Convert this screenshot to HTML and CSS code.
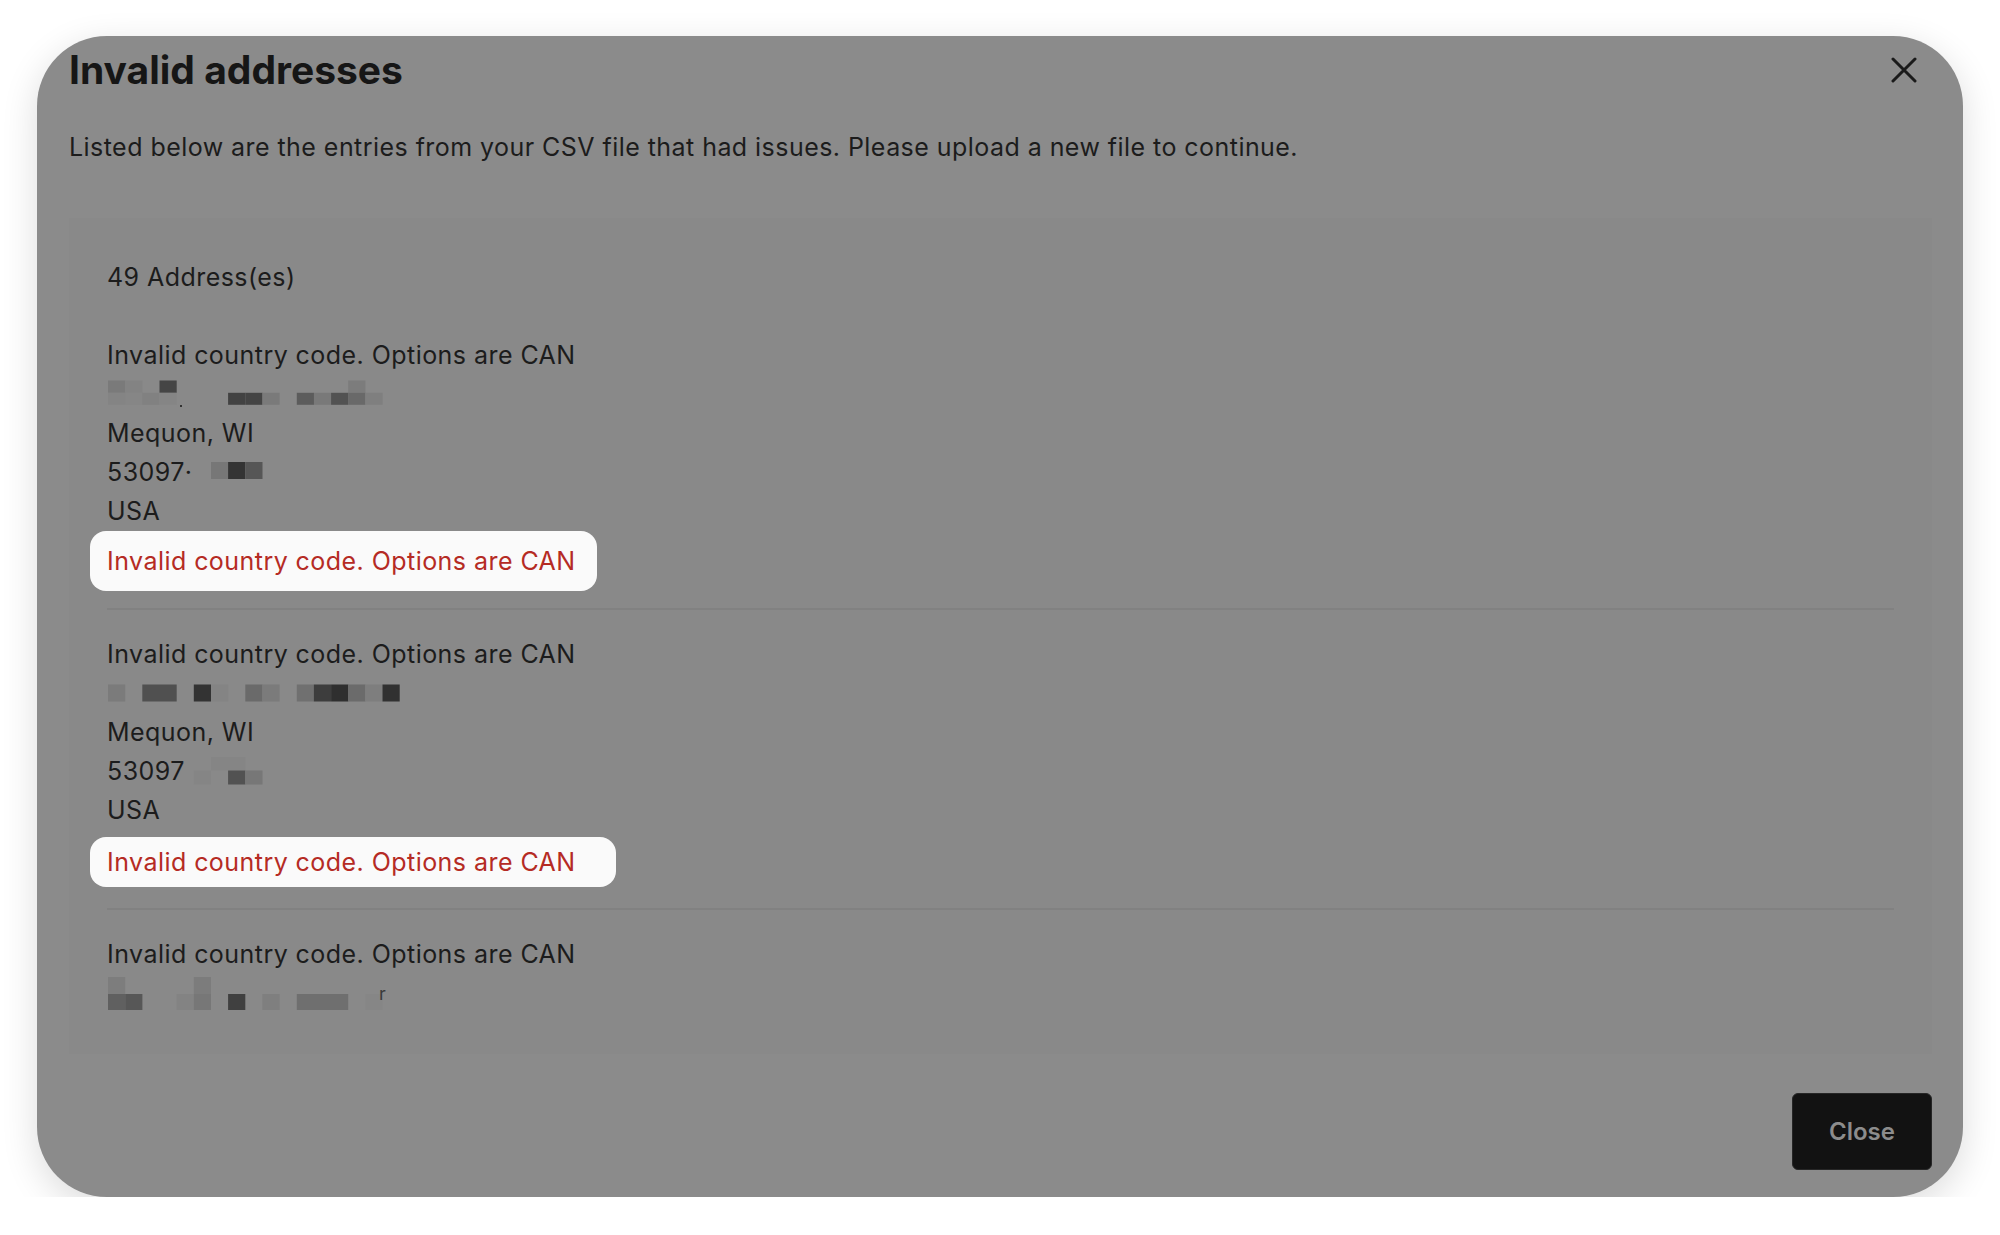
FILE: index.html
```html
<!DOCTYPE html>
<html lang="en">
<head>
    <meta charset="UTF-8">
    <meta name="viewport" content="width=device-width, initial-scale=1.0">
    <title>Invalid addresses</title>
    <link rel="stylesheet" href="styles.css">
</head>
<body>

    <div class="modal">
        <div class="modal-header">
            <h1>Invalid addresses</h1>
            <button class="icon-close" aria-label="Close">
                <svg width="26" height="26" viewBox="0 0 26 26">
                    <path d="M2 2 L24 24 M24 2 L2 24" stroke="#1a1a1a" stroke-width="3" stroke-linecap="round" fill="none"/>
                </svg>
            </button>
        </div>

        <p class="intro">Listed below are the entries from your CSV file that had issues. Please upload a new file to continue.</p>

        <div class="panel">
            <div class="list">
                <div class="count">49 Address(es)</div>

                <div class="entry">
                    <div class="line">Invalid country code. Options are CAN</div>
                    <div class="line redacted">
                        <svg class="blur" width="400" height="39" viewBox="0 0 400 39">
                            <rect x="1" y="5.5" width="17.2" height="12.3" fill="#7a7a7a"/>
                            <rect x="18.2" y="5.5" width="17.2" height="12.3" fill="#838383"/>
                            <rect x="52.5" y="5.5" width="17.2" height="12.3" fill="#454545"/>
                            <rect x="241.2" y="5.5" width="17.2" height="12.3" fill="#7c7c7c"/>
                            <rect x="1" y="17.8" width="17.2" height="12" fill="#848484"/>
                            <rect x="18.2" y="17.8" width="17.2" height="12" fill="#868686"/>
                            <rect x="35.3" y="17.8" width="17.2" height="12" fill="#818181"/>
                            <rect x="52.5" y="17.8" width="17.2" height="12" fill="#858585"/>
                            <rect x="73" y="30" width="2" height="2" fill="#333"/>
                            <rect x="121.1" y="17.8" width="17.2" height="12" fill="#424242"/>
                            <rect x="138.3" y="17.8" width="17.2" height="12" fill="#444444"/>
                            <rect x="155.4" y="17.8" width="17.2" height="12" fill="#7a7a7a"/>
                            <rect x="189.8" y="17.8" width="17.2" height="12" fill="#5c5c5c"/>
                            <rect x="206.9" y="17.8" width="17.2" height="12" fill="#797979"/>
                            <rect x="224.1" y="17.8" width="17.2" height="12" fill="#525252"/>
                            <rect x="241.2" y="17.8" width="17.2" height="12" fill="#696969"/>
                            <rect x="258.4" y="17.8" width="17.2" height="12" fill="#7f7f7f"/>
                        </svg>
                    </div>
                    <div class="line">Mequon, WI</div>
                    <div class="line redacted">53097·
                        <svg class="blur" width="400" height="39" viewBox="0 0 400 39">
                            <rect x="104" y="9" width="17.2" height="17" fill="#777777"/>
                            <rect x="121.1" y="9" width="17.2" height="17" fill="#343434"/>
                            <rect x="138.3" y="9" width="17.2" height="17" fill="#565656"/>
                        </svg>
                    </div>
                    <div class="line">USA</div>
                    <div class="error">Invalid country code. Options are CAN</div>
                </div>

                <div class="entry">
                    <div class="line">Invalid country code. Options are CAN</div>
                    <div class="line redacted">
                        <svg class="blur" width="400" height="39" viewBox="0 0 400 39">
                            <rect x="1" y="10.5" width="17.2" height="17" fill="#7b7b7b"/>
                            <rect x="35.3" y="10.5" width="34.4" height="17" fill="#505050"/>
                            <rect x="86.8" y="10.5" width="17.2" height="17" fill="#333333"/>
                            <rect x="104" y="10.5" width="17.2" height="17" fill="#848484"/>
                            <rect x="138.3" y="10.5" width="17.2" height="17" fill="#6a6a6a"/>
                            <rect x="155.4" y="10.5" width="17.2" height="17" fill="#7b7b7b"/>
                            <rect x="189.8" y="10.5" width="17.2" height="17" fill="#707070"/>
                            <rect x="206.9" y="10.5" width="17.2" height="17" fill="#3d3d3d"/>
                            <rect x="224.1" y="10.5" width="17.2" height="17" fill="#2f2f2f"/>
                            <rect x="241.2" y="10.5" width="17.2" height="17" fill="#6b6b6b"/>
                            <rect x="258.4" y="10.5" width="17.2" height="17" fill="#7e7e7e"/>
                            <rect x="275.5" y="10.5" width="17.2" height="17" fill="#313131"/>
                        </svg>
                    </div>
                    <div class="line">Mequon, WI</div>
                    <div class="line redacted">53097
                        <svg class="blur" width="400" height="39" viewBox="0 0 400 39">
                            <rect x="104" y="5" width="34.4" height="13.5" fill="#858585"/>
                            <rect x="86.8" y="18.5" width="17.2" height="14" fill="#858585"/>
                            <rect x="121.1" y="18.5" width="17.2" height="14" fill="#525252"/>
                            <rect x="138.3" y="18.5" width="17.2" height="14" fill="#777777"/>
                        </svg>
                    </div>
                    <div class="line">USA</div>
                    <div class="error error-wide">Invalid country code. Options are CAN</div>
                </div>

                <div class="entry">
                    <div class="line">Invalid country code. Options are CAN</div>
                    <div class="line redacted">
                        <svg class="blur" width="400" height="39" viewBox="0 0 400 39">
                            <rect x="1" y="3" width="17.2" height="17" fill="#7d7d7d"/>
                            <rect x="86.8" y="3" width="17.2" height="17" fill="#7c7c7c"/>
                            <rect x="1" y="20" width="17.2" height="16" fill="#606060"/>
                            <rect x="18.2" y="20" width="17.2" height="16" fill="#575757"/>
                            <rect x="69.6" y="20" width="17.2" height="16" fill="#838383"/>
                            <rect x="86.8" y="20" width="17.2" height="16" fill="#777777"/>
                            <rect x="121.1" y="20" width="17.2" height="16" fill="#404040"/>
                            <rect x="155.4" y="20" width="17.2" height="16" fill="#7f7f7f"/>
                            <rect x="189.8" y="20" width="51.4" height="16" fill="#6f6f6f"/>
                            <rect x="258.4" y="20" width="17.2" height="16" fill="#868686"/>
                            <text x="272" y="26" font-family="Inter, sans-serif" font-size="18" fill="#3a3a3a">r</text>
                        </svg>
                    </div>
                </div>
            </div>
        </div>

        <div class="modal-footer">
            <button class="btn-close">Close</button>
        </div>
    </div>

</body>
</html>
```

FILE: styles.css
```css
body {
    margin: 0;
    background-color: #fff;
    font-family: Inter, "Noto Sans", sans-serif;
    color: #1c1c1c;
}
.modal {
    margin: 36px 37px 0;
    padding: 11px 31px 27px 32px;
    background-color: #8b8b8b;
    border-radius: 70px;
    box-shadow: 0 10px 36px rgba(0, 0, 0, 0.14);
    display: flex;
    flex-direction: column;
}
.modal-header {
    display: flex;
    align-items: center;
    justify-content: space-between;
}
h1 {
    margin: 0;
    font-size: 39px;
    line-height: 46px;
    font-weight: 700;
    color: #161616;
}
.icon-close {
    border: none;
    background: none;
    padding: 0;
    margin: 0 15px 0 0;
    width: 26px;
    height: 26px;
    cursor: pointer;
}
.icon-close svg {
    display: block;
}
.intro {
    margin: 35px 0 0;
    font-size: 25px;
    line-height: 39px;
    letter-spacing: 0.45px;
}
.panel {
    margin-top: 51px;
    padding: 40px 38px 38px;
    background-color: #898989;
    height: 836px;
    box-sizing: border-box;
}
.list {
    font-size: 25px;
    line-height: 39px;
    letter-spacing: 0.45px;
}
.count {
    margin-bottom: 39px;
}
.entry {
    padding: 0 0 17px;
    border-bottom: 2px solid #818181;
}
.entry + .entry {
    padding-top: 24.5px;
    padding-bottom: 21px;
}
.entry:last-child {
    border-bottom: none;
}
.line {
    height: 39px;
}
.redacted {
    position: relative;
}
.blur {
    position: absolute;
    left: 0;
    top: 0;
}
.error {
    display: inline-block;
    margin-left: -17px;
    padding: 10.5px 21px 10.5px 17px;
    background-color: #fafafa;
    border-radius: 16px;
    color: #b52b24;
}
.error-wide {
    margin-top: 7.5px;
    padding: 5.5px 40px 5.5px 17px;
}
.modal-footer {
    display: flex;
    justify-content: flex-end;
    margin-top: 39px;
}
.btn-close {
    width: 140px;
    height: 77px;
    background-color: #121212;
    color: #8c8c8c;
    border: 1px solid #262626;
    border-radius: 6px;
    font-family: Inter, "Noto Sans", sans-serif;
    font-size: 24px;
    font-weight: 600;
    cursor: pointer;
}
```
